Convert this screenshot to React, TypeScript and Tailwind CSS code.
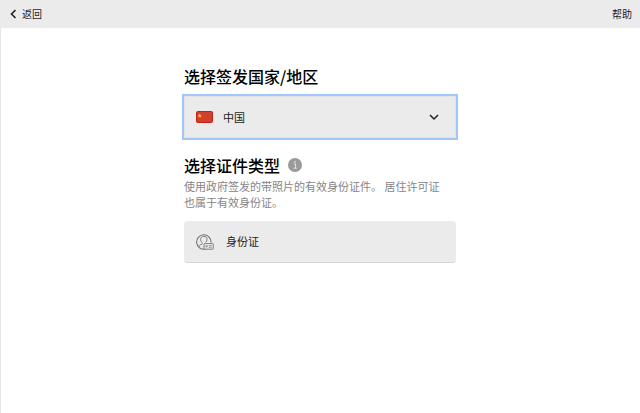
import { useState } from 'react'

const countries = [{ code: 'CN', name: '中国' }]

function FlagCN() {
  return (
    <svg className="w-[17px] h-3" viewBox="0 0 17 12" aria-hidden="true">
      <rect width="17" height="12" rx="2" fill="#c3200f" />
      <rect x="1" y="1" width="15" height="10" rx="1" fill="#d0402c" />
      <path d="M3.700 2.600l.6 1.300 1.500.2-1.100 1 .3 1.500-1.300-.7-1.300.7.3-1.500-1.100-1 1.500-.2z" fill="#fbd13a" />
    </svg>
  )
}

function IdCardIcon() {
  return (
    <svg className="w-[18px] h-4" viewBox="0 0 18 16" fill="none" stroke="#747474" aria-hidden="true">
      <path d="M9.500 15A7.200 7.200 0 1 1 15 8.600" strokeWidth="1.100" />
      <path d="M2.800 12.600c.6-1.500 1.600-2 3.300-2.500.6-.3.500-.9.100-1.500C5 7.700 4.600 6.600 4.600 5.400c0-1.900 1.300-3 3.200-3s3.200 1.100 3.200 3c0 1.100-.4 2.200-1.300 3" strokeWidth=".9" />
      <rect x="8" y="9.600" width="9.300" height="5.600" rx=".6" fill="#ebebeb" strokeWidth=".9" />
      <rect x="9.500" y="11.300" width="2" height="2" fill="#8b8b8b" stroke="none" />
      <path d="M12.800 11.700h3M12.800 13.300h3" strokeWidth=".7" />
    </svg>
  )
}

export default function App() {
  const [country, setCountry] = useState('CN')

  return (
    <div className="min-h-screen flex flex-col bg-white text-[#1c1c1c] font-['Noto_Sans_CJK_SC',sans-serif]">
      <header className="h-7 px-2 flex items-center justify-between bg-[#ebebeb] text-[10px] leading-4">
        <button type="button" className="flex items-center gap-1">
          <svg className="w-[10px] h-[10px]" viewBox="0 0 10 10" fill="none" stroke="#222" strokeWidth="1.600" aria-hidden="true">
            <path d="M7.500 1L3.500 5l4 4" />
          </svg>
          返回
        </button>
        <a href="#help">帮助</a>
      </header>

      <main className="grow border-x border-l-[#e6e6e6] border-r-transparent px-4 pt-9">
        <div className="mx-auto w-full max-w-[272px]">
          <label htmlFor="country" className="block text-base leading-6 font-medium text-black">
            选择签发国家/地区
          </label>
          <div className="relative mt-2">
            <select
              id="country"
              value={country}
              onChange={(e) => setCountry(e.target.value)}
              className="block w-full h-[42px] pl-[38px] pr-8 appearance-none bg-[#ebebeb] border border-[#e2e2e2] text-[11px] outline-2 outline-[#a0c6fb]"
            >
              {countries.map((c) => (
                <option key={c.code} value={c.code}>
                  {c.name}
                </option>
              ))}
            </select>
            <div className="absolute inset-y-0 left-3 right-4 flex items-center justify-between pointer-events-none">
              <FlagCN />
              <svg className="w-3 h-3" viewBox="0 0 12 12" fill="none" stroke="#222" strokeWidth="1.500" aria-hidden="true">
                <path d="M2 4l4 4 4-4" />
              </svg>
            </div>
          </div>

          <section className="mt-[15px]">
            <h2 className="flex items-center gap-2 text-base leading-6 font-medium text-black">
              选择证件类型
              <svg className="w-[14px] h-[14px]" viewBox="0 0 14 14" aria-hidden="true">
                <circle cx="7" cy="7" r="7" fill="#9a9a9a" />
                <path d="M5.700 6h1.800v4.300M5.500 10.300h3.400" fill="none" stroke="#dedede" strokeWidth="1.100" />
                <circle cx="7" cy="3.800" r=".9" fill="#dedede" />
              </svg>
            </h2>
            <p className="mt-px pr-2 text-[11px] leading-4 text-[#858585]">
              使用政府签发的带照片的有效身份证件。 居住许可证也属于有效身份证。
            </p>
            <button
              type="button"
              className="mt-[11px] w-full h-[42px] pl-3 flex items-center gap-3 rounded bg-[#ebebeb] border-b border-[#d4d4d4] text-[11px]"
            >
              <IdCardIcon />
              身份证
            </button>
          </section>
        </div>
      </main>
    </div>
  )
}
